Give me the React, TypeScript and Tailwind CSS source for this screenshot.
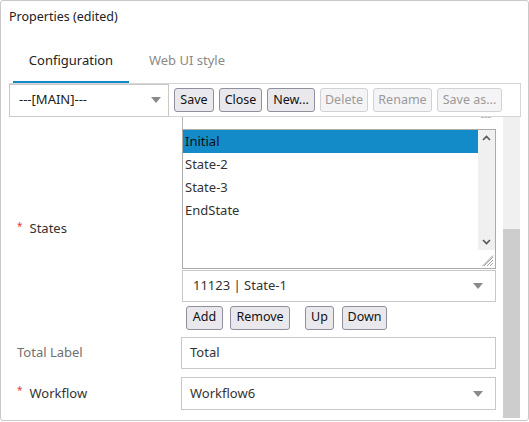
import React from 'react';

const font = { fontFamily: '"Noto Sans", "Open Sans", sans-serif' };

function Caret() {
  return (
    <svg width="10" height="6" viewBox="0 0 10 6" className="shrink-0">
      <path d="M0 0h10L5 6z" fill="#8a8a8a" />
    </svg>
  );
}

function Btn({ label, w, disabled }: { label: string; w: string; disabled?: boolean }) {
  return (
    <button
      className={
        disabled
          ? `${w} h-[24px] rounded-[3px] border border-[#d2d2d6] bg-[#f4f4f6] text-[12.5px] text-[#9a9a9a] flex items-center justify-center`
          : `${w} h-[24px] rounded-[3px] border border-[#8f8f9d] bg-[#e9e9ed] text-[12.5px] text-[#111] flex items-center justify-center`
      }
    >
      {label}
    </button>
  );
}

function Required() {
  return <span className="text-[#e23b3b] text-[10px] mr-[7px] relative -top-[3px]">*</span>;
}

export default function App() {
  const items = ['Initial', 'State-2', 'State-3', 'EndState'];
  return (
    <div style={font} className="w-[529px] h-[421px] border border-[#c9c9c9] rounded-[3px] bg-white flex flex-col overflow-hidden">
      <div className="h-[40px] pl-[8px] pt-[7px] text-[12.5px] text-[#222]">Properties (edited)</div>

      <div className="h-[42px] pl-[12px] flex items-stretch text-[13px]">
        <div className="w-[116px] border-b-2 border-[#1589c8] flex items-center justify-center text-[#222]">
          Configuration
        </div>
        <div className="w-[116px] flex items-center justify-center text-[#8a8a8a] border-b-2 border-transparent">
          Web UI style
        </div>
      </div>

      <div className="ml-[8px] w-[512px] h-[34px] border border-[#d6d6d6] flex items-center gap-[5px]">
        <div className="-ml-px w-[160px] h-[33px] border border-[#c8c8c8] flex items-center justify-between pl-[9px] pr-[7px] text-[13px] text-[#222]">
          <span>---[MAIN]---</span>
          <Caret />
        </div>
        <Btn label="Save" w="w-[40px]" />
        <Btn label="Close" w="w-[43px]" />
        <Btn label="New..." w="w-[48px]" />
        <Btn label="Delete" w="w-[48px]" disabled />
        <Btn label="Rename" w="w-[59px]" disabled />
        <Btn label="Save as..." w="w-[65px]" disabled />
      </div>

      <div className="ml-[8px] w-[512px] h-[301px] flex">
        <div className="w-[494px] flex flex-col text-[13px] text-[#333]">
          <div className="h-[12px] flex">
            <div className="w-[173px]" />
            <div className="w-[314px] border-l border-[#b5b5b5] relative">
              <div className="absolute left-[298px] top-[0px] w-[10px] h-[2px] border-t border-dashed border-[#bbb]" />
            </div>
          </div>

          <div className="flex items-center">
            <div className="w-[173px] pl-[8px] flex items-center">
              <Required />
              <span>States</span>
            </div>
            <div className="w-[314px] flex flex-col">
              <div className="h-[140px] border border-[#ababab] flex">
                <div className="flex-1 flex flex-col">
                  {items.map((it, i) => (
                    <div
                      key={it}
                      className={
                        i === 0
                          ? 'h-[23px] pl-[2px] flex items-center bg-[#148bc9] text-[#111]'
                          : 'h-[23px] pl-[2px] flex items-center'
                      }
                    >
                      {it}
                    </div>
                  ))}
                </div>
                <div className="w-[17px] flex flex-col">
                  <div className="h-[120px] bg-[#f0f0f0] flex flex-col items-center justify-between py-[5px]">
                    <svg width="9" height="6" viewBox="0 0 9 6">
                      <path d="M1 5l3.5-3.5L8 5" stroke="#555" strokeWidth="1.6" fill="none" />
                    </svg>
                    <svg width="9" height="6" viewBox="0 0 9 6">
                      <path d="M1 1l3.5 3.5L8 1" stroke="#555" strokeWidth="1.6" fill="none" />
                    </svg>
                  </div>
                  <div className="flex-1 flex items-end justify-end pr-px pb-px">
                    <svg width="12" height="12" viewBox="0 0 12 12">
                      <path d="M11 2L2 11M11 5L5 11M11 8L8 11M11 0.5L0.5 11" stroke="#999" strokeWidth="0.9" />
                    </svg>
                  </div>
                </div>
              </div>
              <div className="mt-px h-[32px] border border-[#c8c8c8] flex items-center justify-between pl-[10px] pr-[12px]">
                <span>11123 | State-1</span>
                <Caret />
              </div>
              <div className="mt-[4px] ml-[4px] flex items-center h-[23px]">
                <Btn label="Add" w="w-[37px]" />
                <div className="w-[7px]" />
                <Btn label="Remove" w="w-[60px]" />
                <div className="w-[15px]" />
                <Btn label="Up" w="w-[29px]" />
                <div className="w-[8px]" />
                <Btn label="Down" w="w-[45px]" />
              </div>
            </div>
          </div>

          <div className="mt-[8px] flex items-center">
            <div className="w-[172px] pl-[8px] text-[#707070]">Total Label</div>
            <div className="w-[315px] h-[32px] border border-[#c8c8c8] flex items-center pl-[8px]">Total</div>
          </div>

          <div className="mt-[8px] flex items-center">
            <div className="w-[172px] pl-[8px] flex items-center">
              <Required />
              <span>Workflow</span>
            </div>
            <div className="w-[315px] h-[33px] border border-[#c8c8c8] flex items-center justify-between pl-[8px] pr-[12px]">
              <span>Workflow6</span>
              <Caret />
            </div>
          </div>
        </div>
        <div className="w-[17px] bg-[#f0f0f0] flex flex-col">
          <div className="h-[112px]" />
          <div className="flex-1 bg-[#cdcdcd]" />
        </div>
      </div>
    </div>
  );
}
